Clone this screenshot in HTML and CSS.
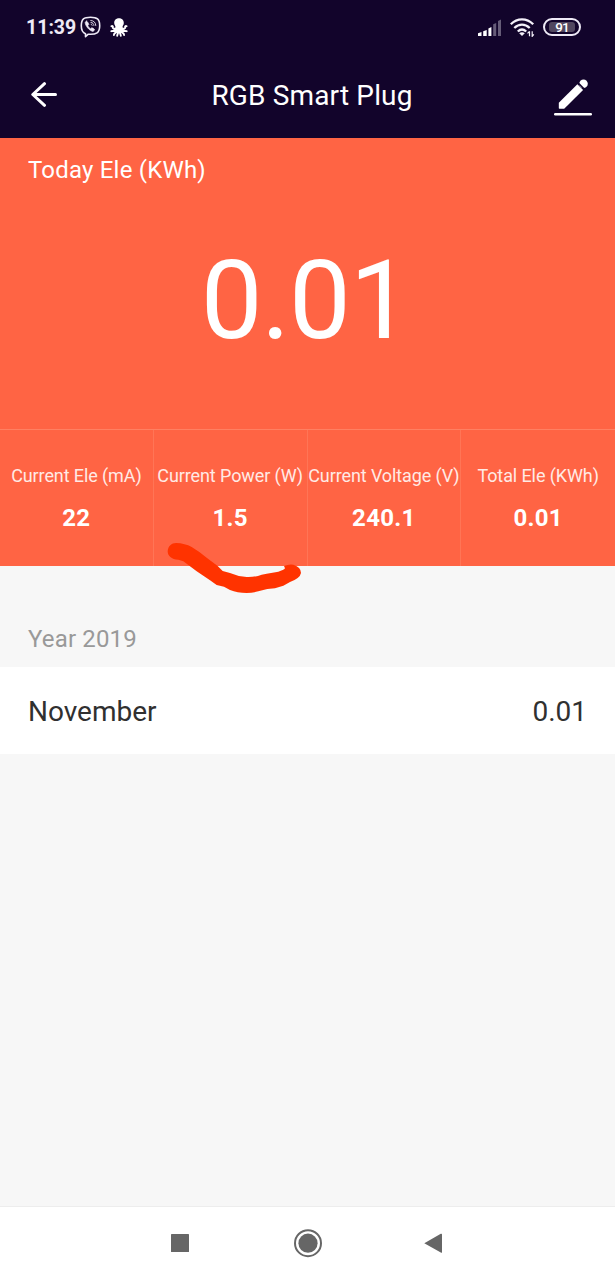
FILE: index.html
```html
<!DOCTYPE html>
<html lang="en">
<head>
<meta charset="utf-8">
<title>RGB Smart Plug</title>
<link rel="stylesheet" href="styles.css">
</head>
<body>
<div class="screen">
  <header class="top">
    <div class="status">
      <span class="clock">11:39</span>
      <svg class="viber" width="21" height="22" viewBox="0 0 21 22" fill="none" stroke="#eeeaf6" stroke-linecap="round" stroke-linejoin="round">
        <path stroke-width="1.6" d="M10.5 1.2C4 1.200 1.300 3 1.300 9.800c0 4.800 1.500 7 4.200 8v2.900l2.800-2.500c8.200.6 11.400-1.500 11.400-8.500C19.700 3 17 1.200 10.500 1.200z"/>
        <path fill="#eeeaf6" stroke-width=".6" d="M6.500 5 5.200 6.300c-.2 3.600 4.300 8.500 7.800 9.200l1.600-1.500c.2-.7-2.200-2.400-2.900-2.200l-1 .9c-1.200-.5-2.400-1.900-2.800-3.200l.9-.9C8.800 7.600 7.200 5 6.500 5z"/>
        <path stroke-width=".9" d="M10.800 4.500c3 .1 4.900 2 5 5M11 6.500c1.800.1 2.800 1.200 2.900 2.900M11.200 8.300c.6.100.9.400 1 1"/>
      </svg>
      <svg class="octopus" width="18" height="19" viewBox="0 0 18 19" fill="none" stroke="#fff" stroke-width="1.900" stroke-linecap="round">
        <path fill="#fff" stroke="none" d="M9 .3c3.200 0 5 2.200 4.800 4.900-.1 1.700-1.300 2.500-1.300 4.100l1 4L9 15.500l-4.500-2.200 1-4C5.500 7.700 4.300 6.900 4.200 5.200 4 2.500 5.800.3 9 .3z"/>
        <path d="M6.500 10C4 11.500 2.300 10.500 2.900 8.800c.2-.6-.8-1-1.500-.5M11.500 10c2.500 1.500 4.200.5 3.600-1.200-.2-.6.8-1 1.500-.5M6.500 12c-1.500 1.600-3.600.8-5.200 1.200M11.500 12c1.500 1.600 3.600.8 5.200 1.200M7 13c0 2-3 1.400-3.100 4M11 13c0 2 3 1.400 3.100 4M8.200 13.500c.1 2-.9 2.400-1 4.300M9.800 13.500c-.1 2 .9 2.400 1 4.300"/>
      </svg>
      <svg class="signal" width="23" height="17" viewBox="0 0 23 17">
        <path fill="#fff" d="M0 14.200 3.500 13v4H0zM5.200 12.300 8.700 11v6H5.200zM10.400 9.400l3-1.400v9h-3z"/>
        <path fill="#665c78" d="M15.200 5.200l3-1.200v13h-3zM20 2l3-1.500V17h-3z"/>
      </svg>
      <svg class="wifi" width="25" height="19" viewBox="0 0 25 19" fill="none" stroke="#f4f1fa" stroke-width="2.300">
        <path d="M.8 6.300c6.500-6.500 15.900-6.500 22.400 0M4.300 10c4.700-4.600 10.700-4.600 15.400 0M7.800 13.500c2.700-2.600 5.700-2.600 8.400 0"/>
        <path fill="#f4f1fa" stroke="none" d="m9.200 15.200c1.800-1.400 3.800-1.400 5.600 0L12 18z"/>
        <path stroke-width="1.200" d="M19.500 13.300v5m-2-3 2-2M22.200 13.300v5l1.600-2"/>
      </svg>
      <span class="battery"><span class="level">91</span></span>
    </div>
    <div class="titlebar">
      <svg class="back" width="26" height="25" viewBox="0 0 26 25" fill="none" stroke="#fff" stroke-width="3" stroke-linecap="round" stroke-linejoin="round">
        <path d="M13.500 1.700 1.800 12.500l11.700 10.800M2.500 12.500h22"/>
      </svg>
      <h1 class="title">RGB Smart Plug</h1>
      <svg class="edit" width="38" height="37" viewBox="0 0 38 37" fill="#fff">
        <path d="M4.800 29.300v-5.500L23.400 5.200l5.700 5.700L10.700 29.300q-.5.500-1.200.5H5.300z"/>
        <circle cx="29.500" cy="4.800" r="4.300"/>
        <path d="M23.800 3.600 30.700 10.500" stroke="#12042b" stroke-width="1.500"/>
        <rect y="34" width="38" height="2.600" rx="1.300"/>
      </svg>
    </div>
  </header>

  <section class="today">
    <div class="today-label">Today Ele (KWh)</div>
    <div class="today-value">0.01</div>
  </section>

  <section class="stats">
    <div class="stat"><span class="name">Current Ele (mA)</span><span class="value">22</span></div>
    <div class="stat"><span class="name">Current Power (W)</span><span class="value">1.5</span></div>
    <div class="stat"><span class="name">Current Voltage (V)</span><span class="value">240.1</span></div>
    <div class="stat"><span class="name">Total Ele (KWh)</span><span class="value">0.01</span></div>
    <svg class="scribble" width="170" height="75" viewBox="0 0 510 225" fill="#ff3300">
      <path d="M78 39Q105 40 125 51Q150 66 170 83L203 108L218 123L240 129Q265 140 290 141Q315 142 335 134L350 131L385 125Q401 121 405 115L402 108Q415 102 430 104Q453 111 453 129Q450 145 420 156L400 167L375 175L352 177L325 184Q308 189 290 189Q262 189 240 180L222 170L200 165L180 151L140 124L100 94L85 89C64 89 53 77 53 64C54 48 65 39 78 39Z"/>
    </svg>
  </section>

  <main class="history">
    <h2 class="year">Year 2019</h2>
    <div class="row"><span>November</span><span>0.01</span></div>
  </main>

  <nav class="nav">
    <svg class="navicons" width="615" height="73" viewBox="0 0 615 73" fill="#666">
      <rect x="171" y="27" width="18" height="18" rx=".6"/>
      <circle cx="308" cy="36.200" r="9.600"/>
      <circle cx="308" cy="36.200" r="13" fill="none" stroke="#666" stroke-width="2"/>
      <path d="M424.300 36.200 440.800 26.800Q442 26.300 442 27.500V45q0 1.300-1.200.6z"/>
    </svg>
  </nav>
</div>
</body>
</html>
```
FILE: styles.css
```css
* { box-sizing: border-box; }
body { margin: 0; font-family: Roboto, "Noto Sans", sans-serif; }
.screen { width: 615px; height: 1280px; display: flex; flex-direction: column; background: #f7f7f7; overflow: hidden; }
svg { display: block; flex: none; }

.top { height: 138px; background: #12042b; color: #fff; }
.status { height: 53px; display: flex; align-items: center; padding: 1px 34px 0 26px; }
.clock { width: 54px; padding-top: 2px; font-size: 19.5px; font-weight: 700; letter-spacing: 0; line-height: 24px; color: #eeeaf6; }
.octopus { margin-left: 9px; }
.signal { margin-left: auto; }
.wifi { margin-left: 9px; margin-right: 8px; }
.battery { width: 38px; height: 18px; border: 2px solid #eeeaf6; border-radius: 9px; padding: 2px 4px; }
.level { display: block; height: 10px; border-radius: 3px; background: #51475f; font-size: 13.5px; font-weight: 500; line-height: 10.5px; text-align: center; letter-spacing: -.8px; }
.titlebar { height: 85px; display: flex; align-items: center; padding: 0 23px 0 31px; }
.back { margin-top: -2px; }
.title { flex: 1; margin: 0; padding-left: 13px; text-align: center; font-size: 28px; font-weight: 400; letter-spacing: .15px; line-height: 36px; }
.edit { margin-top: 4px; }

.today { height: 291px; background: #ff6444; color: #fff; padding: 17px 28px 0; }
.today-label { font-size: 24px; line-height: 30px; letter-spacing: .2px; }
.today-value { margin-top: 51px; font-size: 110px; line-height: 130px; text-align: center; letter-spacing: -1.2px; text-indent: -4px; }

.stats { position: relative; height: 137px; display: grid; grid-template-columns: repeat(4, minmax(0, 1fr)); background: #ff6444; color: #fff; border-top: 1px solid #ff8062; }
.stat { display: flex; flex-direction: column; align-items: center; padding-top: 34px; border-right: 1px solid #ff7556; white-space: nowrap; }
.stat:last-of-type { border-right: 0; }
.name { font-size: 18px; line-height: 24px; letter-spacing: -.1px; color: #ffeae5; }
.value { margin-top: 15px; font-size: 24px; line-height: 30px; font-weight: 700; letter-spacing: .3px; }
.scribble { position: absolute; left: 150px; top: 100px; }

.history { flex: 1; }
.year { margin: 0; padding: 57px 28px 0; height: 101px; font-size: 24px; font-weight: 400; line-height: 32px; letter-spacing: .15px; color: #999; }
.row { height: 87px; display: flex; align-items: center; justify-content: space-between; padding: 1px 28px 0 28px; background: #fff; font-size: 28px; letter-spacing: 0; color: #303030; }

.nav { height: 74px; background: #fff; border-top: 1px solid #ededed; }
```
